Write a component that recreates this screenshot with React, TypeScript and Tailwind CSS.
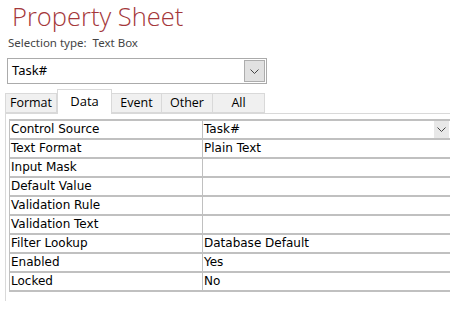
import React from 'react';

const rows: [string, string][] = [
    ['Control Source', 'Task#'],
    ['Text Format', 'Plain Text'],
    ['Input Mask', ''],
    ['Default Value', ''],
    ['Validation Rule', ''],
    ['Validation Text', ''],
    ['Filter Lookup', 'Database Default'],
    ['Enabled', 'Yes'],
    ['Locked', 'No'],
];

const tabs = [
    {label: 'Format', w: 'w-[52px]'},
    {label: 'Data', w: 'w-[55px]'},
    {label: 'Event', w: 'w-[50px]'},
    {label: 'Other', w: 'w-[51px]'},
    {label: 'All', w: 'w-[52px]'},
];

const Chevron = () => (
    <svg width="9" height="5" viewBox="0 0 9 5" fill="none">
        <path d="M0.5 0.5 L4.5 4.5 L8.5 0.5" stroke="#444" strokeWidth="1" />
    </svg>
);

const App: React.FC = () => {
    return (
        <div className="w-[450px] h-[309px] overflow-hidden bg-white relative" style={{fontFamily: '"Open Sans", sans-serif'}}>
            <div className="pl-[12px] pt-[0px] h-[33px] text-[25.5px] leading-[33px] font-light text-[#a4373a]">
                Property Sheet
            </div>
            <div className="pl-[8px] h-[20px] text-[11.5px] leading-[20px] text-[#444444]" style={{fontFamily: '"Noto Sans", sans-serif'}}>
                Selection type:&nbsp; Text Box
            </div>
            <div className="ml-[7px] mt-[5px] w-[260px] h-[26px] border border-[#ababab] flex items-center">
                <div className="flex-1 pl-[4px] text-[13px] text-black" style={{fontFamily: '"Noto Sans", sans-serif'}}>Task#</div>
                <div className="w-[21px] h-[22px] mr-[1px] bg-[#e1e1e1] border border-[#adadad] flex items-center justify-center">
                    <Chevron />
                </div>
            </div>
            <div className="ml-[5px] mt-[5px] flex items-end h-[24px]">
                {tabs.map((t) => (
                    t.label === 'Data' ? (
                        <div key={t.label} className={`${t.w} h-[25px] -mb-px bg-white border border-b-0 border-[#d9d9d9] flex justify-center pt-[2px] text-[13px] text-black relative z-10`}>
                            {t.label}
                        </div>
                    ) : (
                        <div key={t.label} className={`${t.w} h-[20px] bg-[#f0f0f0] border border-l-0 first:border-l border-[#d9d9d9] flex justify-center items-center text-[12.5px] text-black`}>
                            {t.label}
                        </div>
                    )
                ))}
            </div>
            <div className="ml-[5px] w-[600px] h-[188px] border-l border-t border-[#d9d9d9] pl-[3px] pt-[5px]" style={{fontFamily: '"DejaVu Sans", sans-serif'}}>
                <div className="border-t-2 border-l border-[#c0c0c0] w-[600px]">
                    {rows.map(([k, v], i) => (
                        <div key={k} className="flex h-[19px] border-b-2 border-[#c0c0c0]">
                            <div className="w-[193px] pl-[1px] text-[12px] leading-[17px] text-black border-r border-[#c0c0c0]">{k}</div>
                            <div className="w-[246px] pl-[1px] text-[12px] leading-[17px] text-black flex">
                                <span className="flex-1">{v}</span>
                                {i === 0 && (
                                    <span className="w-[16px] h-[17px] bg-[#e8e8e8] border-l border-white flex items-center justify-center">
                                        <Chevron />
                                    </span>
                                )}
                            </div>
                        </div>
                    ))}
                </div>
            </div>
        </div>
    );
};

export default App;
